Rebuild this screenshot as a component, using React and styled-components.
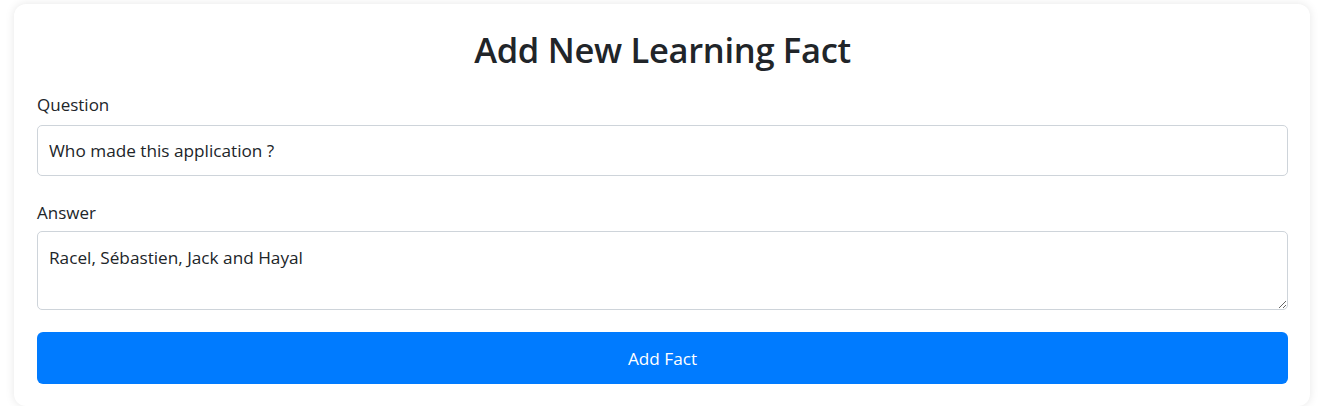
import React, { useState } from 'react'
import styled, { createGlobalStyle } from 'styled-components'

const GlobalStyle = createGlobalStyle`
    body {
        margin: 0;
        background: #ffffff;
        font-family: 'Open Sans', 'Noto Sans', sans-serif;
        color: #212529;
    }
    * { box-sizing: border-box; }
`;

const App = () => {
    const [question, setQuestion] = useState('Who made this application ?')
    const [answer, setAnswer] = useState('Racel, Sébastien, Jack and Hayal')

    return (
        <Page>
            <GlobalStyle />
            <Card>
                <Title>Add New Learning Fact</Title>
                <Field>
                    <Label htmlFor="question">Question</Label>
                    <Input id="question" value={question} onChange={e => setQuestion(e.target.value)} />
                </Field>
                <Field $last>
                    <Label htmlFor="answer" $tight>Answer</Label>
                    <TextArea id="answer" value={answer} onChange={e => setAnswer(e.target.value)} />
                </Field>
                <SubmitButton type="button">Add Fact</SubmitButton>
            </Card>
        </Page>
    )
}

const Page = styled.div`
    padding: 4px 11px 0 14px;
`;

const Card = styled.div`
    width: 1296px;
    background: #ffffff;
    border-radius: 12px;
    box-shadow: 0 0 10px rgba(0, 0, 0, 0.1);
    padding: 25px 22px 22px 23px;
    display: flex;
    flex-direction: column;
`;

const Title = styled.h2`
    margin: 0 0 22px;
    text-align: center;
    font-size: 34.5px;
    font-weight: 600;
    line-height: 42px;
    color: #212529;
    letter-spacing: -0.3px;
`;

const Field = styled.div`
    display: flex;
    flex-direction: column;
    margin-bottom: ${p => (p.$last ? '22px' : '25px')};
`;

const Label = styled.label`
    font-size: 17px;
    line-height: 24px;
    margin-bottom: ${p => (p.$tight ? '6px' : '8px')};
    color: #212529;
`;

const controlStyles = `
    width: 100%;
    font-family: 'Open Sans', 'Noto Sans', sans-serif;
    font-size: 17.2px;
    color: #212529;
    border: 1px solid #ced4da;
    border-radius: 5px;
    padding: 12px 11px;
    line-height: 24px;
    background: #ffffff;
    outline: none;
`;

const Input = styled.input`
    ${controlStyles}
    height: 51px;
`;

const TextArea = styled.textarea`
    ${controlStyles}
    height: 79px;
    padding-top: 14px;
    resize: vertical;
    display: block;
`;

const SubmitButton = styled.button`
    width: 100%;
    height: 52px;
    border: none;
    border-radius: 6px;
    background: #007bff;
    color: #ffffff;
    font-family: 'Open Sans', 'Noto Sans', sans-serif;
    font-size: 17.2px;
    cursor: pointer;
`;

export default App
